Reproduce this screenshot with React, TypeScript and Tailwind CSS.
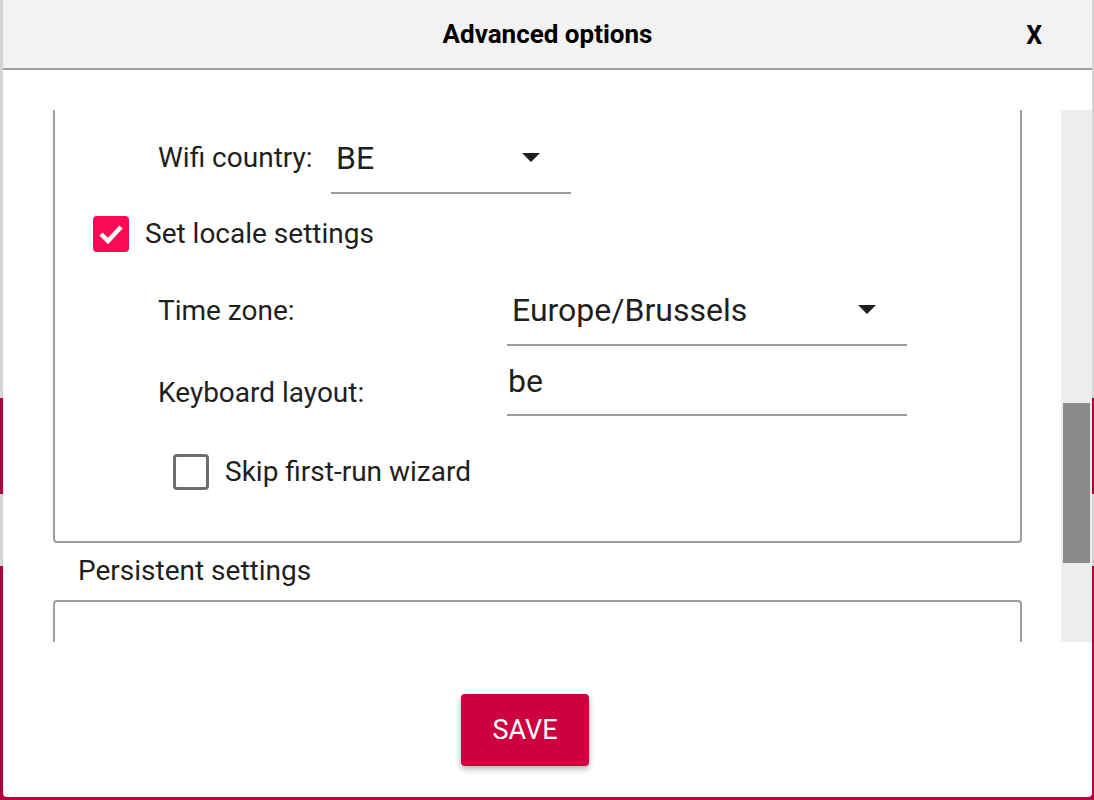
import React from "react";

const font = "font-['Roboto',sans-serif]";
const label = "text-[28px] leading-none text-[#1f1f1f]";

function Arrow() {
  return (
    <svg width="18" height="10" viewBox="0 0 18 10" className="shrink-0">
      <path d="M0 0 L18 0 L9 9 Z" fill="#1f1f1f" />
    </svg>
  );
}

function Combo({ value, width }: { value: string; width: string }) {
  return (
    <div className={`${width} border-b-2 border-[#9a9a9a] pb-[16px]`}>
      <div className="h-[36px] flex items-center justify-between pl-[5px] pr-[31px]">
        <span className="text-[32px] leading-none text-[#1f1f1f]">{value}</span>
        <Arrow />
      </div>
    </div>
  );
}

function App() {
  return (
    <div className={`relative w-[1094px] h-[800px] overflow-hidden ${font}`}>
      {/* page behind the dialog */}
      <div className="flex flex-col h-full">
        <div className="h-[398px] bg-[#d4d4d4]" />
        <div className="h-[96px] bg-[#b4003a]" />
        <div className="h-[72px] bg-[#d4d4d4]" />
        <div className="flex-1 bg-[#b4003a]" />
      </div>

      {/* dialog */}
      <div className="absolute left-[3px] top-0 w-[1089px] h-[797px] bg-white rounded-b-[4px] flex flex-col overflow-hidden">
        <div className="relative h-[70px] bg-[#f2f2f2] border-b-2 border-[#a0a0a0] flex items-center justify-center shrink-0">
          <span className="text-[26px] font-bold text-black">Advanced options</span>
          <span className="absolute right-[50px] top-[17px] text-[25px] font-bold text-black">X</span>
        </div>

        <div className="mt-[40px] h-[532px] flex shrink-0">
          <div className="flex-1 overflow-hidden pl-[50px]">
            <div className="mt-[-20px] w-[969px] border-2 border-[#9e9e9e] rounded-[4px] pt-[48px] pb-[51px]">
              {/* wifi */}
              <div className="flex items-start pl-[103px]">
                <div className={`w-[173px] h-[36px] flex items-center whitespace-nowrap ${label}`}>Wifi country:</div>
                <Combo value="BE" width="w-[240px]" />
              </div>

              {/* locale */}
              <div className="mt-[22px] h-[36px] flex items-center pl-[38px] gap-[16px]">
                <div className="w-[36px] h-[36px] rounded-[4px] bg-[#fa0a55] flex items-center justify-center">
                  <svg width="26" height="22" viewBox="0 0 26 22">
                    <path d="M3 11 L10 18 L23 4" fill="none" stroke="white" strokeWidth="4.5" />
                  </svg>
                </div>
                <span className={label}>Set locale settings</span>
              </div>

              {/* time zone */}
              <div className="mt-[40px] flex items-start pl-[103px]">
                <div className={`w-[349px] h-[36px] mt-[1px] flex items-center ${label}`}>Time zone:</div>
                <Combo value="Europe/Brussels" width="w-[400px]" />
              </div>

              {/* keyboard */}
              <div className="mt-[17px] flex items-start pl-[103px]">
                <div className={`w-[349px] h-[36px] mt-[12px] flex items-center ${label}`}>Keyboard layout:</div>
                <div className="w-[400px] border-b-2 border-[#9a9a9a] pb-[15px]">
                  <div className="h-[36px] flex items-center pl-[1px] text-[32px] leading-none text-[#1f1f1f]">be</div>
                </div>
              </div>

              {/* skip wizard */}
              <div className="mt-[38px] h-[36px] flex items-center pl-[118px] gap-[16px]">
                <div className="w-[36px] h-[36px] rounded-[4px] border-[3px] border-[#6e6e6e]" />
                <span className={label}>Skip first-run wizard</span>
              </div>
            </div>

            <div className={`h-[36px] mt-[10px] ml-[25px] flex items-center ${label}`}>Persistent settings</div>
            <div className="mt-[11px] w-[969px] h-[200px] border-2 border-[#9e9e9e] rounded-[4px]" />
          </div>

          <div className="w-[31px] bg-[#ededed] shrink-0 px-[2px]">
            <div className="mt-[293px] h-[160px] bg-[#8a8a8a]" />
          </div>
        </div>

        <div className="flex-1 flex justify-center pr-[45px] pt-[52px]">
          <button className="w-[128px] h-[72px] rounded-[4px] bg-[#cd0040] text-white text-[27px] shadow-[0_3px_6px_rgba(0,0,0,0.3)]">
            SAVE
          </button>
        </div>
      </div>
    </div>
  );
}

export default App;
